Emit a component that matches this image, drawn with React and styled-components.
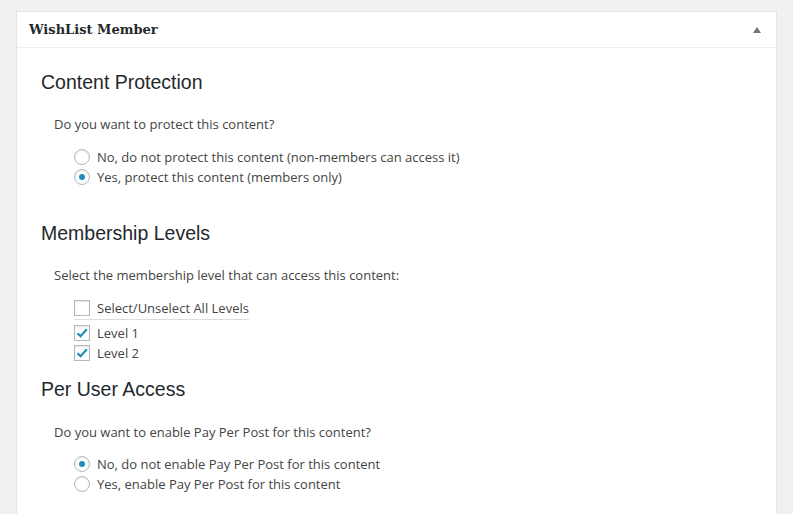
import React from "react";
import styled, { createGlobalStyle } from "styled-components";

const GlobalStyle = createGlobalStyle`
  html, body { margin: 0; padding: 0; }
  body {
    background: #f1f1f1;
    font-family: "Open Sans", "Liberation Sans", sans-serif;
    font-size: 13px;
    color: #444;
  }
`;

const Panel = styled.div`
  box-sizing: border-box;
  margin: 11px 0 0 16px;
  width: 761px;
  min-height: 520px;
  background: #fff;
  border: 1px solid #e5e5e5;
  box-shadow: 0 1px 1px rgba(0, 0, 0, 0.04);
`;

const Header = styled.div`
  box-sizing: border-box;
  height: 36px;
  display: flex;
  align-items: center;
  justify-content: space-between;
  padding: 0 12px;
  border-bottom: 1px solid #eee;
`;

const Title = styled.h2`
  margin: 0;
  font-family: "DejaVu Serif", "Liberation Serif", serif;
  font-weight: bold;
  font-size: 13px;
  color: #23282d;
`;

const Toggle = styled.span`
  width: 0;
  height: 0;
  border-left: 4px solid transparent;
  border-right: 4px solid transparent;
  border-bottom: 6px solid #72777c;
  margin-right: 3px;
`;

const Body = styled.div`
  padding: 0 24px 20px;
`;

const Heading = styled.h3`
  margin: ${(p) => p.$top}px 0 0;
  font-family: "Liberation Sans", Arial, sans-serif;
  font-weight: normal;
  font-size: 19.5px;
  line-height: 24px;
  color: #23282d;
`;

const Question = styled.p`
  margin: ${(p) => p.$top ?? 20}px 0 0 13px;
  line-height: 20px;
`;

const OptionList = styled.div`
  display: flex;
  flex-direction: column;
  align-items: flex-start;
  margin: ${(p) => p.$top}px 0 0 33px;
`;

const Option = styled.label`
  display: inline-flex;
  align-items: center;
  height: 20px;
  line-height: 20px;
  gap: 7px;
  ${(p) => (p.$underline ? "border-bottom: 1px solid #ddd; margin-bottom: 3px; padding-bottom: 1px;" : "")}
`;

const Radio = styled.span`
  box-sizing: border-box;
  width: 16px;
  height: 16px;
  border-radius: 50%;
  border: 1px solid #b4b9be;
  box-shadow: inset 0 1px 2px rgba(0, 0, 0, 0.1);
  display: flex;
  align-items: center;
  justify-content: center;
  &::after {
    content: "";
    width: 6px;
    height: 6px;
    border-radius: 50%;
    background: ${(p) => (p.$checked ? "#1e8cbe" : "transparent")};
  }
`;

const Box = styled.span`
  box-sizing: border-box;
  width: 16px;
  height: 16px;
  border: 1px solid #b4b9be;
  box-shadow: inset 0 1px 2px rgba(0, 0, 0, 0.1);
  display: flex;
  align-items: center;
  justify-content: center;
`;

const Check = () => (
  <svg width="14" height="14" viewBox="0 0 14 14">
    <path d="M2.5 7.2 L5.6 10.2 L11.8 3.2" fill="none" stroke="#1e8cbe" strokeWidth="2.2" />
  </svg>
);

const RadioOption = ({ checked, children }) => (
  <Option>
    <Radio $checked={checked} />
    <span>{children}</span>
  </Option>
);

const CheckOption = ({ checked, underline, children }) => (
  <Option $underline={underline}>
    <Box>{checked && <Check />}</Box>
    <span>{children}</span>
  </Option>
);

export default function App() {
  return (
    <>
      <GlobalStyle />
      <Panel>
        <Header>
          <Title>WishList Member</Title>
          <Toggle />
        </Header>
        <Body>
          <Heading $top={22}>Content Protection</Heading>
          <Question>Do you want to protect this content?</Question>
          <OptionList $top={13}>
            <RadioOption>No, do not protect this content (non-members can access it)</RadioOption>
            <RadioOption checked>Yes, protect this content (members only)</RadioOption>
          </OptionList>

          <Heading $top={34}>Membership Levels</Heading>
          <Question>Select the membership level that can access this content:</Question>
          <OptionList $top={13}>
            <CheckOption underline>Select/Unselect All Levels</CheckOption>
            <CheckOption checked>Level 1</CheckOption>
            <CheckOption checked>Level 2</CheckOption>
          </OptionList>

          <Heading $top={14}>Per User Access</Heading>
          <Question $top={21}>Do you want to enable Pay Per Post for this content?</Question>
          <OptionList $top={12}>
            <RadioOption checked>No, do not enable Pay Per Post for this content</RadioOption>
            <RadioOption>Yes, enable Pay Per Post for this content</RadioOption>
          </OptionList>
        </Body>
      </Panel>
    </>
  );
}
